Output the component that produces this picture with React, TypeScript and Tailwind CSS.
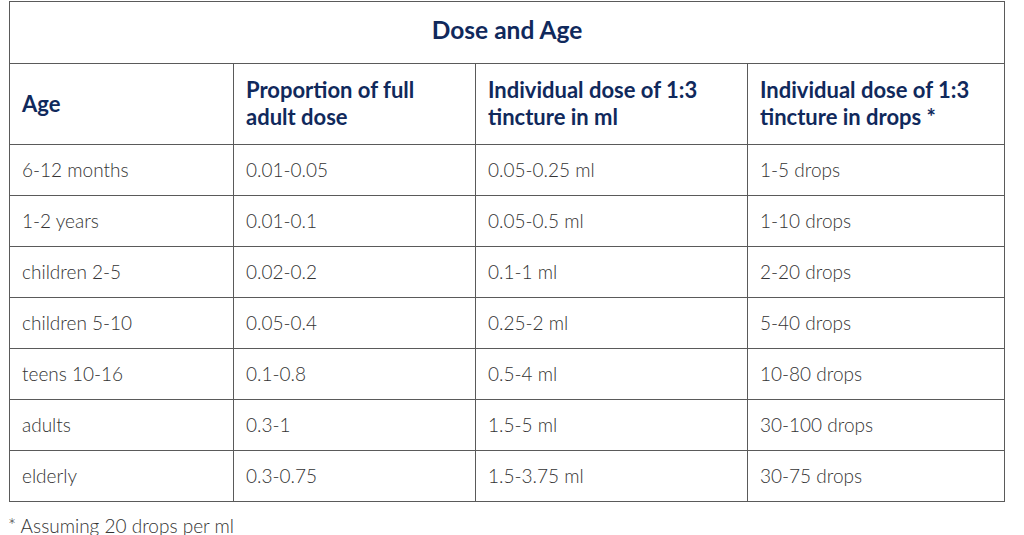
import React from "react";

const rows = [
  ["6-12 months", "0.01-0.05", "0.05-0.25 ml", "1-5 drops"],
  ["1-2 years", "0.01-0.1", "0.05-0.5 ml", "1-10 drops"],
  ["children 2-5", "0.02-0.2", "0.1-1 ml", "2-20 drops"],
  ["children 5-10", "0.05-0.4", "0.25-2 ml", "5-40 drops"],
  ["teens 10-16", "0.1-0.8", "0.5-4 ml", "10-80 drops"],
  ["adults", "0.3-1", "1.5-5 ml", "30-100 drops"],
  ["elderly", "0.3-0.75", "1.5-3.75 ml", "30-75 drops"],
];

export default function App() {
  return (
    <div className="w-[1024px] h-[535px] overflow-hidden bg-white" style={{ fontFamily: "Lato, 'Open Sans', sans-serif" }}>
      <div className="pl-[9px] pt-[1px]">
        <table className="border-collapse w-[995px] table-fixed">
          <colgroup>
            <col className="w-[224px]" />
            <col className="w-[242px]" />
            <col className="w-[272px]" />
            <col className="w-[257px]" />
          </colgroup>
          <thead>
            <tr className="h-[62px]">
              <th colSpan={4} className="border border-[#5a5a5a] text-center text-[24.5px] font-bold text-[#10295c] align-middle pb-[4px]">
                Dose and Age
              </th>
            </tr>
            <tr className="h-[81px]">
              {["Age", "Proportion of full adult dose", "Individual dose of 1:3 tincture in ml", "Individual dose of 1:3 tincture in drops *"].map((h, i) => (
                <th key={i} className="border border-[#5a5a5a] text-left align-middle pl-[12px] pr-[16px] pb-[2px] text-[22px] leading-[27px] font-bold text-[#10295c]">
                  {h}
                </th>
              ))}
            </tr>
          </thead>
          <tbody>
            {rows.map((r, i) => (
              <tr key={i} className="h-[51px]">
                {r.map((c, j) => (
                  <td key={j} className="border border-[#5a5a5a] pl-[12px] text-[19px] font-light text-[#333] align-middle">
                    {c}
                  </td>
                ))}
              </tr>
            ))}
          </tbody>
        </table>
        <div className="mt-[12px] -ml-[1px] text-[19px] font-light text-[#333] leading-[24px]">* Assuming 20 drops per ml</div>
      </div>
    </div>
  );
}
